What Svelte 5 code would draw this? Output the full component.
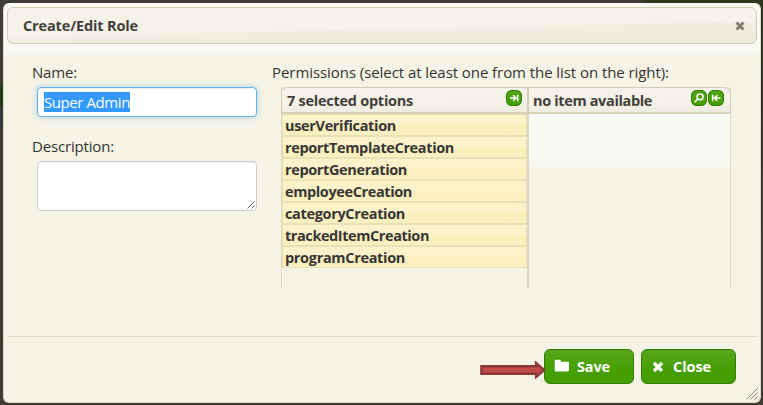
<script>
  const selected = [
    { name: 'userVerification', width: 111 },
    { name: 'reportTemplateCreation', width: 169 },
    { name: 'reportGeneration', width: 122 },
    { name: 'employeeCreation', width: 127 },
    { name: 'categoryCreation', width: 120 },
    { name: 'trackedItemCreation', width: 144 },
    { name: 'programCreation', width: 120 }
  ];

  // Spreads a label's letters evenly so that it fills the given width.
  function fit(node, width) {
    const range = document.createRange();
    range.selectNodeContents(node);
    const natural = range.getBoundingClientRect().width;
    node.style.letterSpacing = `${(width - natural) / node.textContent.length}px`;
  }
</script>

<div class="page">
  <section class="dialog">
    <header class="titlebar">
      <h1><span use:fit={115}>Create/Edit Role</span></h1>
      <svg class="x" width="10" height="10" viewBox="0 0 10 10"><path d="M1.5 1.5 8.5 8.5M8.5 1.5 1.5 8.5" /></svg>
    </header>

    <div class="content">
      <div class="fields">
        <div class="label"><span use:fit={45}>Name:</span></div>
        <div class="input"><mark><span use:fit={86}>Super Admin</span></mark></div>
        <div class="label second"><span use:fit={82}>Description:</span></div>
        <div class="textarea">
          <svg width="8" height="8" viewBox="0 0 8 8"><path d="M.5 7.5 7.5.5M4.5 7.5l3-3" /></svg>
        </div>
      </div>

      <div class="permissions">
        <div class="label"><span use:fit={397}>Permissions (select at least one from the list on the right):</span></div>
        <div class="picker">
          <div class="pane left">
            <div class="head">
              <span use:fit={126}>7 selected options</span>
              <i class="tool"><svg width="16" height="16" viewBox="0 0 16 16"><path d="M4 8h6M7.2 5.2 10 8 7.2 10.8M11.7 4.8v6.4" /></svg></i>
            </div>
            {#each selected as item}
              <div class="row"><span use:fit={item.width}>{item.name}</span></div>
            {/each}
          </div>
          <div class="pane right">
            <div class="head">
              <span use:fit={119}>no item available</span>
              <i class="tool"><svg width="16" height="16" viewBox="0 0 16 16"><rect x="6.2" y="4.2" width="5.8" height="5.4" rx="2" /><path d="M6.5 9.3 3.6 12.2" /></svg></i>
              <i class="tool"><svg width="16" height="16" viewBox="0 0 16 16"><path d="M12.5 8h-6M9.3 5.2 6.5 8 9.3 10.8M4.7 4.8v6.4" /></svg></i>
            </div>
            <div class="empty"></div>
          </div>
        </div>
      </div>
    </div>

    <footer>
      <button class="save">
        <svg width="16" height="14" viewBox="0 0 16 14"><path class="fill" d="M.7 2Q.7.8 1.9.8h3.8Q6.9.8 6.9 2v.7h6.6Q15 2.7 15 4v7.2q0 1.3-1.5 1.3H2.1Q.7 12.5.7 11.2Z" /></svg>
        <span use:fit={33}>Save</span>
      </button>
      <button class="close">
        <svg width="12" height="12" viewBox="0 0 12 12"><path class="cross" d="M2 2l8 8M10 2l-8 8" /></svg>
        <span use:fit={38}>Close</span>
      </button>
    </footer>
    <svg class="grip" width="12" height="12" viewBox="0 0 12 12"><path d="M.5 11.5 11.5.5M4.5 11.5l7-7M8.5 11.5l3-3" /></svg>
    <svg class="arrow" width="66" height="18" viewBox="0 0 66 18"><path d="M1.5 5.2h54.7V2.2L64 9l-7.8 6.8v-3H1.5Z" /></svg>
  </section>
</div>

<style>
  :global(body) { margin: 0; overflow: hidden; }
  * { box-sizing: border-box; }
  .page {
    width: 763px; height: 405px; padding: 3px 2px 2px 3px;
    background:
      linear-gradient(#223817, #223817) 0 85px / 4px 21px no-repeat,
      linear-gradient(#343a38, #343a38) 0 107px / 4px 20px no-repeat,
      linear-gradient(#2c371c, #2c371c) 645px 0 / 118px 4px no-repeat,
      linear-gradient(#2c341f, #34332b 95px, #3d3a34) 759px 0 / 4px 250px no-repeat,
      #3f3b35;
    font-family: "Open Sans", "Noto Sans", sans-serif;
    font-size: 15px; color: #362b36;
  }
  .dialog {
    position: relative; display: flex; flex-direction: column;
    width: 758px; height: 400px; padding: 3px;
    border: 1px solid #dfd9c3; border-top-color: #fafaf4; border-radius: 6px;
    background: linear-gradient(#fafaf4 40px, #f5f3e5 57px);
  }
  .titlebar {
    display: flex; align-items: center; justify-content: space-between;
    height: 37px; padding: 1px 11px 0 15px; flex: none;
    border: 1px solid #d4ccb0; border-radius: 6px;
    background: linear-gradient(178.8deg, #f5f2ea 0 56%, #f0ede1 58%, #eeebdf);
  }
  h1 { margin: 0; font-size: 14.5px; line-height: 20px; font-weight: 700; color: #433f38; }
  span { white-space: nowrap; display: inline-block; }
  svg { display: block; fill: none; flex: none; }
  .x { stroke: #847e71; stroke-width: 3; }
  .content { display: flex; height: 292px; padding: 17px 0 0 25px; flex: none; }
  .fields { width: 240px; }
  .label { height: 26px; line-height: 22px; color: #333; }
  .input, .textarea { width: 220px; margin-left: 5px; background: #fff; border: 1px solid #ccc; border-radius: 4px; }
  .input {
    height: 30px; padding: 4px 6px; border-color: #66afe9;
    box-shadow: inset 0 1px 1px #00000013, 0 0 6px #66afe980;
  }
  mark { display: block; width: 86px; height: 20px; line-height: 20px; background: #3399ff; color: #fff; }
  .second { margin-top: 18px; }
  .textarea { height: 50px; display: flex; align-items: flex-end; justify-content: flex-end; padding: 1px; box-shadow: inset 0 1px 1px #00000013; }
  .textarea svg { stroke: #666; }
  .picker { display: flex; width: 450px; height: 201px; margin-left: 9px; }
  .pane { border: solid #dfd9c3; border-width: 0 1px; }
  .left { width: 247px; }
  .right { width: 203px; }
  .head {
    display: flex; height: 27px; margin: 0 -1px; padding: 3px 6px 0 5px;
    border: 1px solid #d4ccb0; border-bottom-width: 2px; border-bottom-color: #d7d0b8;
    background: linear-gradient(179deg, #f5f2eb 0 55%, #eeebdf);
    color: #433f38; font-size: 14.5px; font-weight: 700; line-height: 20px;
  }
  .pane { position: relative; }
  .head span { margin-right: auto; }
  .left .head { border-top-left-radius: 6px; }
  .right .head { border-top-right-radius: 6px; padding-left: 4px; }
  .tool {
    width: 16px; height: 16px; margin: -1px 0 0 1px; flex: none;
    border-radius: 6px; background: linear-gradient(#50a516, #459e00); box-shadow: inset 0 0 0 1px #327e04;
  }
  .left .tool { margin-right: -1px; }
  .tool svg { stroke: #fff; stroke-width: 1.6; }
  .row {
    height: 22px; padding-left: 2px; line-height: 22px;
    border: 1px solid #e8e1b5; font-size: 14.5px; font-weight: 700; color: #363636;
    background: linear-gradient(#fcf2c9 0 48%, #faeeb9 56%, #fbf0c3);
  }
  .empty { height: 58px; background: linear-gradient(#fafaf4 40px, #f5f3e5); }
  footer {
    display: flex; justify-content: flex-end; gap: 7px; flex: 1;
    padding: 12px 21px 0 0; border-top: 1px solid #dfd9c3;
  }
  button {
    display: flex; align-items: center; height: 35px; padding: 0;
    font: 700 14.5px/20px "Open Sans", "Noto Sans", sans-serif; color: #fff;
    border: 1px solid #327e04; border-radius: 6px;
    background: linear-gradient(#55a51a, #459e00 65%);
  }
  .save { width: 90px; padding-left: 9px; gap: 7px; }
  .close { width: 95px; padding-left: 10px; gap: 9px; }
  .fill { fill: #fff; }
  .save svg { margin-top: -2px; }
  .cross { stroke: #fff; stroke-width: 3.3; }
  .grip { position: absolute; right: 2px; bottom: 2px; stroke: #87847b; }
  .arrow { position: absolute; left: 476px; top: 357px; fill: #be4b48; stroke: #8c3836; stroke-width: 2.6; }
</style>
